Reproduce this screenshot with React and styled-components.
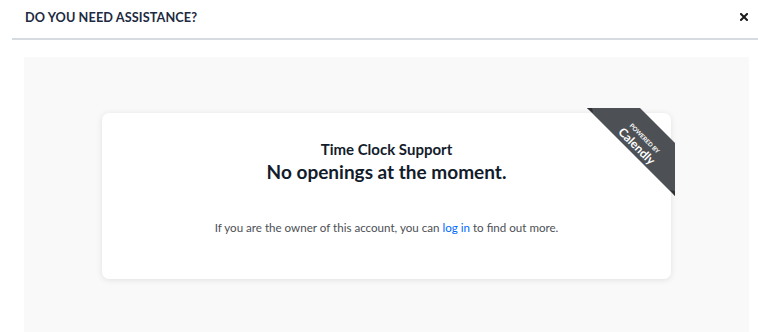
import React from 'react'
import styled, { createGlobalStyle } from 'styled-components'

const GlobalStyle = createGlobalStyle`
  body {
    margin: 0;
    background: #ffffff;
    font-family: Lato, "Open Sans", Arial, sans-serif;
  }
`

const Page = styled.div`
  width: 758px;
  height: 332px;
  overflow: hidden;
  background: #ffffff;
`

const Header = styled.div`
  display: flex;
  align-items: center;
  justify-content: space-between;
  height: 38px;
  margin-left: 12px;
  padding: 0 10px 0 13px;
  border-bottom: 2px solid #d6dbe1;
`

const Title = styled.h1`
  margin: 0;
  margin-top: -4px;
  font-size: 12.7px;
  font-weight: 700;
  letter-spacing: 0.1px;
  color: #1c2a42;
`

const Close = styled.button`
  border: none;
  background: none;
  padding: 0;
  margin-top: -4px;
  cursor: pointer;
  display: flex;
  align-items: center;
`

const Panel = styled.div`
  margin: 17px 9px 0 24px;
  height: 275px;
  padding-top: 56px;
  box-sizing: border-box;
  background: #f9f9f9;
`

const Card = styled.div`
  position: relative;
  width: 569px;
  height: 166px;
  margin: 0 auto;
  box-sizing: border-box;
  padding-top: 26px;
  background: #ffffff;
  border-radius: 7px;
  box-shadow: 0 1px 6px rgba(0, 0, 0, 0.1);
  text-align: center;
`

const EventName = styled.div`
  font-size: 15px;
  line-height: 20px;
  font-weight: 700;
  color: #131c2b;
`

const Heading = styled.div`
  font-size: 19px;
  line-height: 26px;
  font-weight: 700;
  color: #131c2b;
`

const Note = styled.p`
  margin: 35px 0 0;
  font-size: 11.6px;
  line-height: 16px;
  color: #4d5055;
`

const Link = styled.a`
  color: #0069ff;
  text-decoration: none;
`

const Badge = styled.svg`
  position: absolute;
  top: -5px;
  right: -4px;
`

const CalendlyBadge = () => (
  <Badge width="88" height="88" viewBox="0 0 88 88">
    <polygon points="0,0 53,0 88,35 88,88" fill="#4d5055" />
    <polygon points="0,0 6,5 5,0" fill="#2f3135" />
    <polygon points="88,88 83,82 88,83" fill="#2f3135" />
    <g transform="translate(44 44) rotate(45)">
      <text
        x="0"
        y="-17"
        textAnchor="middle"
        fill="#ffffff"
        fontFamily="Lato, Arial, sans-serif"
        fontWeight="700"
        fontSize="6"
      >
        POWERED BY
      </text>
      <text
        x="0"
        y="-4"
        textAnchor="middle"
        fill="#ffffff"
        fontFamily="Lato, Arial, sans-serif"
        fontWeight="700"
        fontSize="12"
      >
        Calendly
      </text>
    </g>
  </Badge>
)

const App = () => (
  <Page>
    <GlobalStyle />
    <Header>
      <Title>DO YOU NEED ASSISTANCE?</Title>
      <Close aria-label="Close">
        <svg width="8" height="8" viewBox="0 0 8 8">
          <path d="M1 1L7 7M7 1L1 7" stroke="#1a1a1a" strokeWidth="2" strokeLinecap="square" />
        </svg>
      </Close>
    </Header>
    <Panel>
      <Card>
        <EventName>Time Clock Support</EventName>
        <Heading>No openings at the moment.</Heading>
        <Note>
          If you are the owner of this account, you can <Link href="#">log in</Link> to find out more.
        </Note>
        <CalendlyBadge />
      </Card>
    </Panel>
  </Page>
)

export default App
